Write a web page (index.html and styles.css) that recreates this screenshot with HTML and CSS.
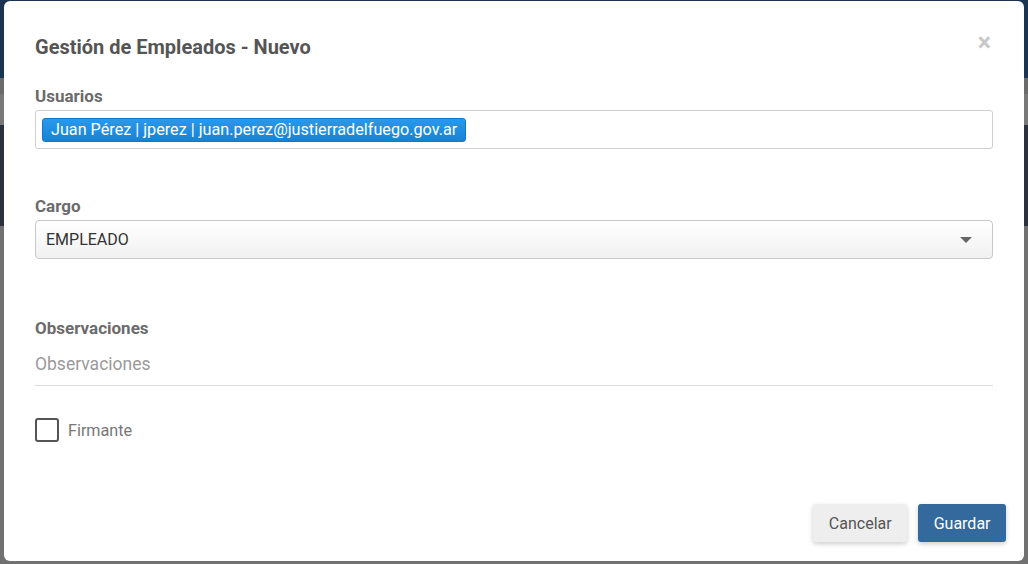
FILE: index.html
```html
<!DOCTYPE html>
<html lang="es">

<head>
  <meta charset="UTF-8">
  <title>Gestión de Empleados - Nuevo</title>
  <link rel="stylesheet" href="styles.css">
</head>

<body>
  <div class="backdrop">
    <div class="modal">
      <div class="modal-header">
        <h4 class="modal-title">Gestión de Empleados - Nuevo</h4>
        <span class="close">&times;</span>
      </div>
      <div class="modal-body">
        <div class="field field-users">
          <label class="label">Usuarios</label>
          <div class="tag-input">
            <span class="tag">Juan Pérez | jperez | juan.perez@justierradelfuego.gov.ar</span>
          </div>
        </div>
        <div class="field field-cargo">
          <label class="label">Cargo</label>
          <div class="select">
            <span>EMPLEADO</span>
            <span class="caret"></span>
          </div>
        </div>
        <div class="field field-obs">
          <label class="label">Observaciones</label>
          <div class="text-line">Observaciones</div>
        </div>
        <div class="check">
          <span class="box"></span>
          <span>Firmante</span>
        </div>
      </div>
      <div class="modal-footer">
        <button class="btn btn-default">Cancelar</button>
        <button class="btn btn-primary">Guardar</button>
      </div>
    </div>
  </div>
</body>

</html>
```
FILE: styles.css
```css
html,
body {
  margin: 0;
  padding: 0;
}

body {
  font-family: Roboto, "Liberation Sans", Arial, sans-serif;
  width: 1028px;
  height: 564px;
  overflow: hidden;
  background: linear-gradient(to bottom,
      #1b3452 0, #1b3452 78px,
      #6b6b6b 78px, #6b6b6b 94px,
      #787878 94px, #787878 125px,
      #2b323d 125px, #2b323d 226px,
      #717171 226px, #717171 564px);
}

.backdrop {
  padding: 1px 4px 0 4px;
}

.modal {
  background: #fff;
  border-radius: 6px;
  height: 560px;
  display: flex;
  flex-direction: column;
  box-sizing: border-box;
  padding: 0 31px;
}

.modal-header {
  display: flex;
  justify-content: space-between;
  align-items: center;
  padding-top: 33px;
}

.modal-title {
  margin: 0;
  font-size: 20px;
  font-weight: 700;
  color: #555;
  line-height: 26px;
}

.close {
  font-size: 25px;
  font-weight: 700;
  color: #c8c8c8;
  line-height: 20px;
  margin-right: 2px;
  margin-top: -9px;
}

.modal-body {
  flex: 1;
  padding-top: 26px;
}

.label {
  display: block;
  font-size: 17px;
  font-weight: 700;
  color: #6b6b6b;
  line-height: 20px;
  margin-bottom: 4px;
}

.field-users {
  margin-bottom: 47px;
}

.field-cargo {
  margin-bottom: 59px;
}

.field-obs {
  margin-bottom: 32px;
}

.tag-input {
  height: 39px;
  box-sizing: border-box;
  border: 1px solid #d0d0d0;
  border-radius: 3px;
  padding: 7px 6px;
}

.tag {
  display: inline-block;
  background: linear-gradient(to bottom, #2a99ea, #1583d6);
  border: 1px solid #1577c4;
  border-radius: 3px;
  color: #fff;
  font-size: 16.2px;
  line-height: 22px;
  padding: 0 8px;
}

.select {
  height: 39px;
  box-sizing: border-box;
  border: 1px solid #c8c8c8;
  border-radius: 4px;
  background: linear-gradient(to bottom, #fff, #f1f1f1);
  display: flex;
  justify-content: space-between;
  align-items: center;
  padding: 0 20px 0 10px;
  font-size: 16px;
  color: #333;
}

.caret {
  width: 0;
  height: 0;
  border-left: 6px solid transparent;
  border-right: 6px solid transparent;
  border-top: 6px solid #666;
}

.text-line {
  font-size: 17.5px;
  color: #9a9a9a;
  border-bottom: 1px solid #dcdcdc;
  padding: 12px 0 11px;
  line-height: 20px;
}

.check {
  display: flex;
  align-items: center;
  gap: 9px;
  font-size: 16.2px;
  color: #777;
}

.box {
  width: 20px;
  height: 20px;
  border: 2px solid #555;
  border-radius: 3px;
}

.modal-footer {
  display: flex;
  justify-content: flex-end;
  gap: 11px;
  margin-right: -13px;
  padding-bottom: 19px;
}

.btn {
  font-family: inherit;
  font-size: 16px;
  height: 38px;
  border: 0;
  border-radius: 3px;
  padding: 0 15.5px;
}

.btn-default {
  background: #eeeeee;
  color: #555;
  box-shadow: 0 2px 5px rgba(0, 0, 0, 0.2);
}

.btn-primary {
  background: #33699c;
  color: #fff;
  box-shadow: 0 2px 5px rgba(0, 0, 0, 0.2);
}
```
